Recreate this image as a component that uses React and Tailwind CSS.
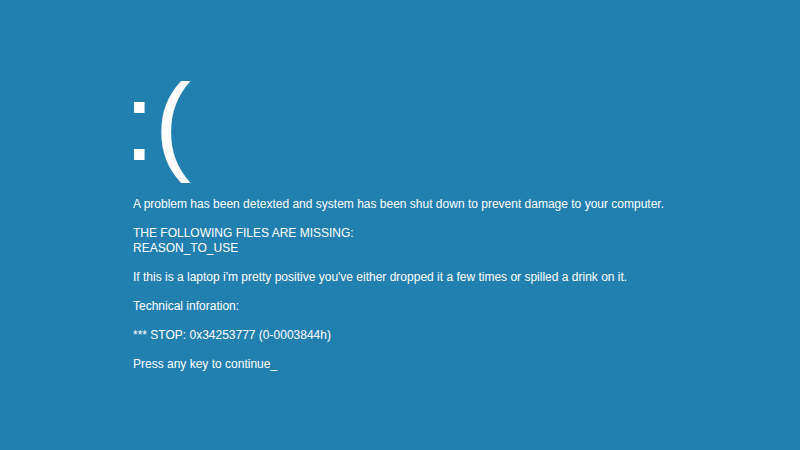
import React from 'react';

const App = () => {
  return (
    <div
      className="w-[800px] h-[450px] bg-[#2280b0] text-white overflow-hidden"
      style={{ fontFamily: '"Liberation Sans", Arial, sans-serif' }}
    >
      <div className="pl-[133px] pt-[67px]">
        {/* Sad face */}
        <div className="text-[110px] leading-none h-[130px] -ml-[9px]">:(</div>
        <div className="text-[12px] leading-[15px] flex flex-col gap-[14px]">
          <p>A problem has been detexted and system has been shut down to prevent damage to your computer.</p>
          <p>
            THE FOLLOWING FILES ARE MISSING:
            <br />
            REASON_TO_USE
          </p>
          <p>If this is a laptop i'm pretty positive you've either dropped it a few times or spilled a drink on it.</p>
          <p>Technical inforation:</p>
          <p>*** STOP: 0x34253777 (0-0003844h)</p>
          <p>Press any key to continue_</p>
        </div>
      </div>
    </div>
  );
};

export default App;
